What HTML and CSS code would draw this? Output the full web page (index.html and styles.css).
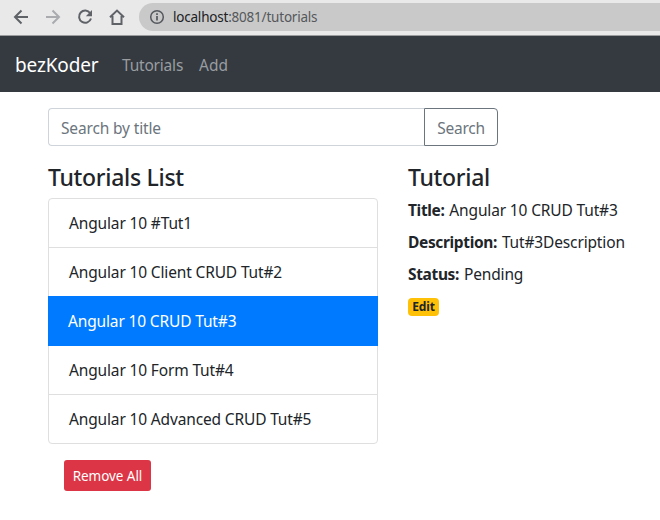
FILE: index.html
```html
<!DOCTYPE html>
<html lang="en">
<head>
<meta charset="utf-8">
<title>Tutorials</title>
<link rel="stylesheet" href="styles.css">
</head>
<body>
<header class="browser">
  <svg class="tools" width="139" height="35" viewBox="0 0 139 35" fill="none" stroke="#5f6368" stroke-width="2">
    <path d="M28 17H15.5M21.5 10.5L15 17L21.5 23.5"/>
    <path stroke="#a9abae" d="M46 17H58.5M52.5 10.5L59 17L52.5 23.5"/>
    <path d="M90.2 13.2A6.1 6.1 0 1 0 91 18.5"/>
    <path fill="#5f6368" stroke="none" d="M92 10V16.2H85.8Z"/>
    <path d="M110 17.2L117 10.6L124 17.2M112.5 16V24H121.5V16"/>
  </svg>
  <div class="address">
    <svg width="16" height="16" viewBox="0 0 16 16" fill="none" stroke="#54585c">
      <circle cx="8" cy="8" r="6.3" stroke-width="1.5"/>
      <path stroke-width="1.7" d="M8 7V11.5M8 4.3V6"/>
    </svg>
    <span class="url"><span class="host">localhost</span>:8081/tutorials</span>
  </div>
</header>
<nav class="navbar">
  <a class="brand">bezKoder</a>
  <a class="nav-link">Tutorials</a>
  <a class="nav-link add">Add</a>
</nav>
<main class="container">
  <div class="search">
    <input class="search-input" type="text" placeholder="Search by title">
    <button class="search-button">Search</button>
  </div>
  <div class="columns">
    <section class="list-column">
      <h4>Tutorials List</h4>
      <ul class="list">
        <li>Angular 10 #Tut1</li>
        <li>Angular 10 Client CRUD Tut#2</li>
        <li class="active">Angular 10 CRUD Tut#3</li>
        <li>Angular 10 Form Tut#4</li>
        <li>Angular 10 Advanced CRUD Tut#5</li>
      </ul>
      <button class="remove">Remove All</button>
    </section>
    <section class="detail">
      <h4>Tutorial</h4>
      <p><strong>Title:</strong> Angular 10 CRUD Tut#3</p>
      <p><strong>Description:</strong> Tut#3Description</p>
      <p><strong>Status:</strong> Pending</p>
      <a class="badge">Edit</a>
    </section>
  </div>
</main>
</body>
</html>
```
FILE: styles.css
```css
* { box-sizing: border-box; }
body {
  margin: 0;
  background: #fff;
  color: #212529;
  font: 15.5px/24px "Noto Sans", "Open Sans", sans-serif;
  letter-spacing: -0.15px;
  overflow: hidden;
}
button, input { font: inherit; letter-spacing: inherit; }
.browser {
  display: flex;
  height: 36px;
  background: #e9e9e9;
  border-bottom: 1px solid #9b9c9d;
}
.tools { flex: none; }
.address {
  flex: 1;
  display: flex;
  align-items: center;
  gap: 8px;
  height: 28px;
  margin-top: 3px;
  padding-left: 10px;
  border-radius: 14px 0 0 14px;
  background: #c9c9c9;
}
.url { font-size: 13.5px; color: #55585c; letter-spacing: -0.21px; }
.host { color: #202124; }
.navbar {
  display: flex;
  align-items: center;
  height: 56px;
  padding: 1px 15px 0;
  background: #343a40;
}
.brand { width: 107px; color: #fff; font-size: 19px; }
.nav-link { width: 77px; color: #999da0; letter-spacing: -0.2px; }
.nav-link.add { letter-spacing: 0; }
.container { padding: 16px 0 0 48px; }
.search { display: flex; width: 450px; height: 38px; margin-bottom: 16px; }
.search-input {
  flex: 1;
  min-width: 0;
  padding: 2px 12px 0;
  border: 1px solid #ced4da;
  border-right: 0;
  border-radius: 4px 0 0 4px;
}
.search-input::placeholder { color: #6c757d; opacity: 1; }
.search-button {
  width: 74px;
  padding: 1px 0 0;
  border: 1px solid #6c757d;
  border-radius: 0 4px 4px 0;
  background: #fff;
  color: #6c757d;
  letter-spacing: -0.25px;
}
.columns { display: flex; gap: 30px; }
.list-column { width: 330px; }
h4 {
  margin: 0 0 6px;
  padding-top: 1px;
  font-size: 23px;
  line-height: 29px;
  font-weight: 500;
  letter-spacing: -0.3px;
}
.list {
  margin: 0;
  padding: 0;
  list-style: none;
  border: 1px solid #dfdfdf;
  border-radius: 4px;
}
.list li { height: 49px; padding: 12px 20px 0; border-bottom: 1px solid #dfdfdf; }
.list li:last-child { height: 48px; border-bottom: 0; }
.list .active {
  height: 50px;
  margin: -1px -1px 0;
  padding: 13px 20px 0;
  border-color: #007bff;
  background: #007bff;
  color: #fff;
}
.remove {
  display: block;
  width: 87px;
  height: 31px;
  margin: 16px 0 0 16px;
  padding: 0;
  border: 0;
  border-radius: 3px;
  background: #dc3545;
  color: #fff;
  font-size: 13.5px;
  letter-spacing: -0.05px;
}
.detail { white-space: nowrap; }
.detail p { margin: 0 0 8px; }
.detail strong { margin-right: 1px; letter-spacing: -0.35px; }
.badge {
  display: flex;
  align-items: center;
  justify-content: center;
  width: 31px;
  height: 18px;
  margin-top: 12px;
  border-radius: 4px;
  background: #ffc107;
  font-size: 12px;
  font-weight: 700;
}
```
